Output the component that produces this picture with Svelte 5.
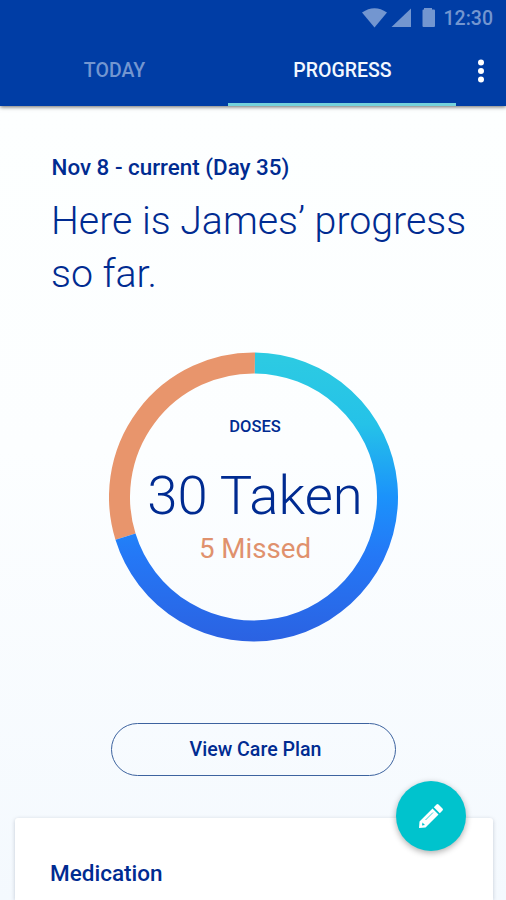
<script lang="ts">
	const taken = 30;
	const missed = 5;

	const tabs = ['TODAY', 'PROGRESS'];
	let active = $state('PROGRESS');

	// the ring is drawn clockwise from twelve o'clock, the split is in degrees
	const radius = 134;
	const split = 252.8;

	function point(deg: number) {
		const a = ((deg - 90) * Math.PI) / 180;
		return `${144.5 + radius * Math.cos(a)} ${145 + radius * Math.sin(a)}`;
	}

	function arc(from: number, to: number) {
		const large = to - from > 180 ? 1 : 0;
		return `M${point(from)} A${radius} ${radius} 0 ${large} 1 ${point(to)}`;
	}
</script>

<div class="screen">
	<header class="app-bar">
		<div class="status">
			<svg width="75" height="22" viewBox="0 0 75 22">
				<path d="M0 5.5Q12.5-3 25 5.5L12.5 20.5Z" />
				<path d="M49 1.5V20H29.5Z" />
				<path d="M62 2.5V1h8v1.5h2q1 0 1 1V19q0 1-1 1H61.5q-1 0-1-1V3.5q0-1 1-1Z" />
			</svg>
			<span class="clock">12:30</span>
		</div>
		<nav class="tabs">
			{#each tabs as tab}
				<button class="tab" class:active={active === tab} onclick={() => (active = tab)}>
					{tab}
				</button>
			{/each}
			<button class="more" aria-label="More options">
				<svg width="8" height="26" viewBox="0 0 8 26">
					<circle cx="4" cy="4.5" r="3" />
					<circle cx="4" cy="13" r="3" />
					<circle cx="4" cy="21.5" r="3" />
				</svg>
			</button>
		</nav>
	</header>

	<main>
		<p class="period">Nov 8 - current (Day 35)</p>
		<h1>Here is James’ progress<br />so far.</h1>

		<div class="doses">
			<svg class="ring" viewBox="0 0 290 290">
				<defs>
					<linearGradient id="taken" x1="0" y1="0" x2="0" y2="290" gradientUnits="userSpaceOnUse">
						<stop offset="0" stop-color="#2dcbe2" />
						<stop offset="0.25" stop-color="#25c2e8" />
						<stop offset="0.5" stop-color="#1b92fb" />
						<stop offset="0.7" stop-color="#2478f6" />
						<stop offset="1" stop-color="#2b62e2" />
					</linearGradient>
				</defs>
				<path d={arc(split, 360.6)} stroke="#e8956c" />
				<path d={arc(0.6, split)} stroke="url(#taken)" />
			</svg>
			<div class="summary">
				<span class="label">DOSES</span>
				<span class="taken">{taken} Taken</span>
				<span class="missed">{missed} Missed</span>
			</div>
		</div>

		<button class="plan">View Care Plan</button>
	</main>

	<section class="card">
		<h2>Medication</h2>
	</section>

	<button class="fab" aria-label="Edit">
		<svg width="26" height="26" viewBox="0 0 26 26">
			<path
				fill="#fff"
				fill-rule="evenodd"
				d="M1 25 1.5 18.5 14.5 5.5 20.5 11.5 7.5 24.5ZM4.5 19.5 4 22.5 7 22Z"
			/>
			<path fill="#fff" d="M15.8 4.2 18.5 1.5q1-1 2 0l4 4q1 1 0 2L21.8 10.2Z" />
			<path stroke="#00c3cd" stroke-width="0.8" d="M7.5 17 15 9.5" />
		</svg>
	</button>
</div>

<style>
	:global(body) {
		margin: 0;
	}

	.screen {
		position: relative;
		width: 506px;
		height: 900px;
		overflow: hidden;
		display: flex;
		flex-direction: column;
		font-family: Roboto, sans-serif;
		color: #002b91;
		background: linear-gradient(#fdffff 106px, #fcfeff 450px, #f4f9fe 900px);
	}

	button {
		padding: 0;
		border: none;
		background: none;
		font: inherit;
		color: inherit;
		cursor: pointer;
	}

	svg {
		display: block;
	}

	.app-bar {
		flex: none;
		height: 106px;
		display: flex;
		flex-direction: column;
		background: #003da5;
		box-shadow: 0 1px 4px rgba(0, 0, 0, 0.6);
	}

	.status {
		height: 36px;
		display: flex;
		align-items: center;
		justify-content: flex-end;
		gap: 7px;
		padding-right: 13px;
		color: #7396d0;
	}

	.status svg {
		fill: currentColor;
	}

	.clock {
		padding-top: 1px;
		font-size: 19.5px;
		font-weight: 500;
		line-height: 36px;
	}

	.tabs {
		flex: 1;
		display: flex;
	}

	.tab {
		width: 228px;
		box-sizing: border-box;
		border-bottom: 3px solid transparent;
		padding: 2px 0 0 1px;
		font-size: 19.5px;
		font-weight: 500;
		color: #7396d0;
	}

	.tab.active {
		color: #f2f8ff;
		border-bottom-color: #74d2dc;
	}

	.more {
		flex: 1;
		display: flex;
		justify-content: center;
		padding-top: 22px;
		fill: #fff;
	}

	main {
		flex: 1;
		display: flex;
		flex-direction: column;
		padding: 47px 0 0;
	}

	.period {
		margin: 0 0 0 51.5px;
		font-size: 22.4px;
		font-weight: 500;
		line-height: 28px;
	}

	h1 {
		margin: 14px 0 0 51px;
		font-size: 39.3px;
		font-weight: 300;
		line-height: 53px;
		white-space: nowrap;
	}

	.doses {
		display: grid;
		width: 290px;
		height: 290px;
		margin: 51px 0 0 109px;
	}

	.ring,
	.summary {
		grid-area: 1 / 1;
	}

	.ring path {
		fill: none;
		stroke-width: 21;
	}

	.summary {
		display: flex;
		flex-direction: column;
		align-items: center;
		padding: 64px 0 0 2px;
		white-space: nowrap;
	}

	.label {
		font-size: 16.5px;
		font-weight: 500;
		line-height: 22px;
	}

	.taken {
		margin-top: 28px;
		font-size: 54.4px;
		font-weight: 300;
		line-height: 60px;
	}

	.missed {
		margin-top: 7px;
		font-size: 27.7px;
		line-height: 32px;
		color: #e0916d;
	}

	.plan {
		box-sizing: border-box;
		width: 285px;
		height: 53px;
		margin: 81px 0 0 111px;
		padding: 0 0 0 4px;
		border: 1.5px solid #3d639f;
		border-radius: 27px;
		font-size: 19.6px;
		font-weight: 500;
	}

	.card {
		flex: none;
		height: 82px;
		margin: 0 13px 0 15px;
		background: #fff;
		border-radius: 3px 3px 0 0;
		box-shadow: 0 1px 4px rgba(0, 20, 50, 0.2);
	}

	h2 {
		margin: 41px 0 0 35px;
		font-size: 22.5px;
		font-weight: 500;
		line-height: 28px;
	}

	/* floats over the card's top edge */
	.fab {
		position: absolute;
		right: 40px;
		bottom: 49px;
		width: 70px;
		height: 70px;
		display: flex;
		align-items: center;
		justify-content: center;
		border-radius: 50%;
		background: #00c3cd;
		box-shadow: 0 2px 6px rgba(0, 0, 0, 0.32);
	}
</style>
